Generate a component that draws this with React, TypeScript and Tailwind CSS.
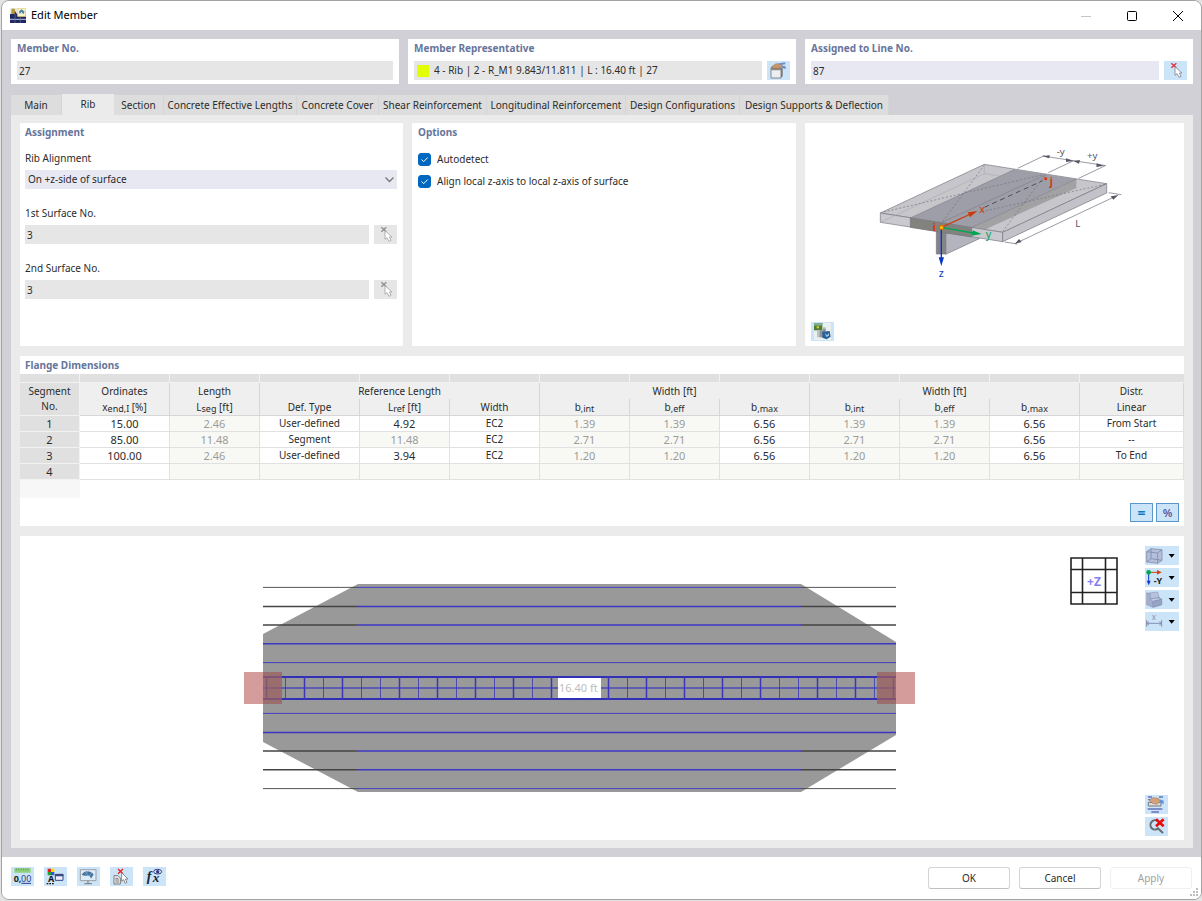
import { useState, type ReactNode } from "react";
import clsx from "clsx";

const tabs = [
  { label: "Main", className: "w-[51px]" },
  { label: "Rib", className: "w-[52px]" },
  { label: "Section", className: "w-[50px]" },
  { label: "Concrete Effective Lengths", className: "w-[133px]" },
  { label: "Concrete Cover", className: "w-[82px]" },
  { label: "Shear Reinforcement", className: "w-[108px]" },
  { label: "Longitudinal Reinforcement", className: "w-[139px]" },
  { label: "Design Configurations", className: "w-[114px]" },
  { label: "Design Supports & Deflection", className: "w-[149px]" },
];

// cells starting with "~" are calculated and shown as locked
const rows = [
  ["15.00", "~2.46", "User-defined", "4.92", "EC2", "~1.39", "~1.39", "6.56", "~1.39", "~1.39", "6.56", "From Start"],
  ["85.00", "~11.48", "Segment", "~11.48", "EC2", "~2.71", "~2.71", "6.56", "~2.71", "~2.71", "6.56", "--"],
  ["100.00", "~2.46", "User-defined", "3.94", "EC2", "~1.20", "~1.20", "6.56", "~1.20", "~1.20", "6.56", "To End"],
  ["", "~", "~", "~", "~", "~", "~", "~", "~", "~", "~", "~"],
];

const columns = [
  "w-[60px]",
  "w-[90px]",
  "w-[90px]",
  "w-[100px]",
  "w-[90px]",
  "w-[90px]",
  "w-[90px]",
  "w-[90px]",
  "w-[90px]",
  "w-[90px]",
  "w-[90px]",
  "w-[90px]",
  "w-auto",
];

const Heading = ({ children }: { children: ReactNode }) => (
  <h2 className="font-bold leading-4 text-[#66759b]">{children}</h2>
);

type IconButtonProps = {
  label: string;
  children: ReactNode;
  disabled?: boolean;
};

const IconButton = ({ label, children, disabled }: IconButtonProps) => (
  <button
    aria-label={label}
    disabled={disabled}
    className={clsx("h-[19px] w-[23px] shrink-0", disabled ? "bg-[#e6e6e6]" : "bg-[#cce4f7]")}
  >
    <svg viewBox="0 0 69 57" className="size-full">
      {children}
    </svg>
  </button>
);

const PickIcon = ({ muted }: { muted?: boolean }) => (
  <>
    <path d="M22 7l15 13M37 7L22 20" stroke={muted ? "#8c8c8c" : "#e0303c"} strokeWidth="4" />
    <path
      d="M33 17v26l6-5 6 11 6-3-5-10h8z"
      fill="#fff"
      stroke={muted ? "#a5a5a5" : "#7d8794"}
      strokeWidth="2.5"
    />
  </>
);

const TitleIcon = () => (
  <svg viewBox="0 0 48 45" className="h-[15px] w-4">
    <rect y="18" width="48" height="27" fill="#20285e" />
    <path d="M0 34h48" stroke="#b8c4e6" strokeWidth="3" />
    <path d="M15 18v27M31 26v19" stroke="#6773a8" strokeWidth="2" />
    <rect width="22" height="18" fill="#e8e8e8" />
    <path d="M5 2h10v8l3 8H4V8z" fill="#b3983d" />
    <path d="M15 9l6 9h-7z" fill="#2a3566" />
    <rect x="23" y="1" width="24" height="24" fill="#f7f2c8" stroke="#e7d46c" strokeWidth="2" />
    <path d="M27 10l8-6 9 7-4 8-5-7-6 6z" fill="#5282b6" />
  </svg>
);

const CaptionBar = () => (
  <header className="flex h-[29px] shrink-0 items-center bg-white pl-2">
    <TitleIcon />
    <h1 className="ml-[5px] text-[11px] text-black">Edit Member</h1>
    <div className="ml-auto flex h-full">
      <button aria-label="Minimize" className="flex w-[46px] items-center justify-center">
        <svg viewBox="0 0 10 10" className="size-[10px]" stroke="#c4c4c4">
          <path d="M0 5.5h10" />
        </svg>
      </button>
      <button aria-label="Maximize" className="flex w-[46px] items-center justify-center">
        <svg viewBox="0 0 10 10" className="size-[10px]" fill="none" stroke="#000">
          <rect x=".5" y=".5" width="9" height="9" rx="1" />
        </svg>
      </button>
      <button aria-label="Close" className="flex w-[46px] items-center justify-center">
        <svg viewBox="0 0 10 10" className="size-[10px]" stroke="#000">
          <path d="M0 0l10 10M10 0L0 10" />
        </svg>
      </button>
    </div>
  </header>
);

const MemberFields = () => (
  <div className="grid grid-cols-3 gap-[9px]">
    <section className="bg-white px-[6px] pt-px pb-1">
      <Heading>
        <label htmlFor="member-no">Member No.</label>
      </Heading>
      <input id="member-no" readOnly defaultValue="27" className="mt-[5px] block h-[19px] w-full bg-[#e6e6e6] px-[2px]" />
    </section>
    <section className="bg-white px-[6px] pt-px pb-1">
      <Heading>
        <label htmlFor="representative">Member Representative</label>
      </Heading>
      <div className="mt-[5px] flex gap-[5px]">
        <div className="flex h-[19px] flex-1 items-center gap-[5px] bg-[#e6e6e6] pl-[3px]">
          <span className="size-3 shrink-0 bg-[#e1ff00]" />
          <input
            id="representative"
            readOnly
            defaultValue="4 - Rib | 2 - R_M1 9.843/11.811 | L : 16.40 ft | 27"
            className="min-w-0 flex-1 bg-transparent"
          />
        </div>
        <IconButton label="Edit representative">
          <path d="M12 20h30v31H12z" fill="#eceef0" stroke="#85898e" strokeWidth="3" />
          <path d="M12 18h30v10H12z" fill="#8f8a86" />
          <path d="M42 22l5-5v28l-5 6z" fill="#777" />
          <path d="M14 17l13-9 14 1 6 6-10 7H20z" fill="#c9966c" stroke="#8d6546" strokeWidth="1.5" />
          <path d="M35 7l20-3v6l-14 2zM44 14l12 2v8l-10-3z" fill="#6c8fc5" />
        </IconButton>
      </div>
    </section>
    <section className="bg-white px-[6px] pt-px pb-1">
      <Heading>
        <label htmlFor="line-no">Assigned to Line No.</label>
      </Heading>
      <div className="mt-[5px] flex gap-[5px]">
        <input id="line-no" defaultValue="87" className="h-[19px] min-w-0 flex-1 bg-[#e8e8f3] px-[2px]" />
        <IconButton label="Pick line">
          <PickIcon />
        </IconButton>
      </div>
    </section>
  </div>
);

const SurfaceField = ({ id, label }: { id: string; label: string }) => (
  <div className="mt-4">
    <label htmlFor={id} className="block leading-4">
      {label}
    </label>
    <div className="mt-1 flex gap-[5px]">
      <input id={id} readOnly defaultValue="3" className="h-[19px] min-w-0 flex-1 bg-[#e6e6e6] px-[2px]" />
      <IconButton label={`Pick ${label}`} disabled>
        <PickIcon muted />
      </IconButton>
    </div>
  </div>
);

const Assignment = () => (
  <section className="bg-white pt-px pr-[6px] pl-[5px]">
    <Heading>Assignment</Heading>
    <label htmlFor="alignment" className="mt-[10px] block leading-4">
      Rib Alignment
    </label>
    <div className="relative mt-1">
      <select id="alignment" className="block h-[19px] w-full appearance-none bg-[#e8e8f3] px-[3px]">
        <option>On +z-side of surface</option>
        <option>On -z-side of surface</option>
      </select>
      <svg
        viewBox="0 0 9 6"
        className="pointer-events-none absolute top-[7px] right-[3px] h-[6px] w-[9px]"
        fill="none"
        stroke="#777"
        strokeWidth="1.3"
      >
        <path d="M.5 .5l4 4 4-4" />
      </svg>
    </div>
    <SurfaceField id="surface-1" label="1st Surface No." />
    <SurfaceField id="surface-2" label="2nd Surface No." />
  </section>
);

const Option = ({ label }: { label: string }) => (
  <label className="flex h-[22px] items-center gap-[6px]">
    <span className="relative size-[13px]">
      <input
        type="checkbox"
        defaultChecked
        className="peer block size-[13px] appearance-none rounded-[3px] border border-[#8a8a8a] bg-white checked:border-[#0067c0] checked:bg-[#0067c0]"
      />
      <svg
        viewBox="0 0 13 13"
        className="pointer-events-none absolute inset-0 hidden peer-checked:block"
        fill="none"
        stroke="#fff"
      >
        <path d="M3.5 6.5l2.2 2.2 4-4.2" />
      </svg>
    </span>
    {label}
  </label>
);

const RibSketch = () => (
  <svg viewBox="15 9 1137 669" className="size-full" fontFamily="Noto Sans, sans-serif">
    <g stroke="#75757f" strokeWidth="2" strokeLinejoin="round">
      <path d="M437 339l0 64 101-47v-16z" fill="#b4b4be" />
      <path d="M409 330h28v72h-28z" fill="#83838a" />
      <path d="M553 133l367 58-312 146-367-58z" fill="#c6c6cb" />
      <path d="M645 148l184 29-314 146-184-29z" fill="#9e9ea9" stroke="none" />
      <path d="M515 323l314-146v27L540 335z" fill="#a2a2a5" stroke="none" />
      <path d="M241 279l367 58v28l-367-58z" fill="#c9c9cf" />
      <path d="M331 294l184 29v28l-184-29z" fill="#82827f" />
      <path d="M608 337l312-146v28L608 365z" fill="#c2c2c8" />
      <path d="M645 148L331 294M829 177L515 323M740 163L424 308" fill="none" strokeWidth="1.5" />
      <path d="M553 133v28l276 43M553 161L241 307" fill="none" stroke="#a2a2ab" strokeWidth="1.5" />
    </g>
    <g fill="none" stroke="#71717c" strokeWidth="2" strokeDasharray="6 6">
      <path d="M251 276L725 165M553 135L428 305M915 193L545 275M608 335L735 165" />
    </g>
    <path d="M553 262L728 182" stroke="#4f4f5c" strokeWidth="3" strokeDasharray="15 11" />
    <g fill="none" stroke="#666676" strokeWidth="2">
      <path d="M653 145l80-38M745 158l76-36M836 175l80-38M728 108l190 29" />
      <path d="M614 366l38 6M926 218l38 6M645 371l310-146" />
    </g>
    <g fill="#555565">
      <path d="M728 108l22-2-3 9zM820 123l-22-8 0 11zM820 123l20-3-3 11zM912 137l-22-7-1 11z" />
      <path d="M645 371l12-14 8 9zM954 226l-22 3 8 10z" />
    </g>
    <g fontSize="29" fill="#555563">
      <text x="770" y="105">-y</text>
      <text x="861" y="118">+y</text>
      <text x="826" y="322">L</text>
    </g>
    <path d="M424 322l88-40" stroke="#cc3c0a" strokeWidth="4" />
    <path d="M532 273l-29 4 7 15z" fill="#cc3c0a" />
    <path d="M424 322l96 17" stroke="#00a651" strokeWidth="4" />
    <path d="M545 342l-27-11-3 16z" fill="#00a651" />
    <path d="M424 324v92" stroke="#0a37c8" strokeWidth="4" />
    <path d="M424 438l-8-26h16z" fill="#0a37c8" />
    <rect x="419" y="317" width="11" height="11" fill="#ffc400" stroke="#d96500" strokeWidth="3" />
    <circle cx="737" cy="176" r="5" fill="#e03a12" />
    <g fontSize="32">
      <text x="538" y="278" fill="#cc3c0a">x</text>
      <text x="557" y="354" fill="#00a651">y</text>
      <text x="416" y="471" fill="#0a37c8">z</text>
      <g fontWeight="bold" fill="#d63a10">
        <text x="398" y="334">i</text>
        <text x="749" y="195">j</text>
      </g>
    </g>
  </svg>
);

const th = "border-r border-[#d6d6d8] bg-[#efefef] font-normal";
const sub = "-bottom-px text-[9px]";

const FlangeTable = () => (
  <table className="w-full table-fixed border-separate border-spacing-0 text-center">
    <colgroup>
      {columns.map((width, i) => (
        <col key={i} className={width} />
      ))}
    </colgroup>
    <thead>
      <tr className="h-[9px]">
        {columns.map((_, i) => (
          <td key={i} className="border-r border-b border-[#f2f2f2] bg-[#e0e0e0] last:border-r-0" />
        ))}
      </tr>
      <tr className="h-4 leading-4">
        <th rowSpan={2} className="border-r border-b border-[#f2f2f2] bg-[#e0e0e0] font-normal leading-[15px]">
          Segment
          <br />
          No.
        </th>
        <th className={th}>Ordinates</th>
        <th className={th}>Length</th>
        <th colSpan={3} className={th}>Reference Length</th>
        <th colSpan={3} className={th}>Width [ft]</th>
        <th colSpan={3} className={th}>Width [ft]</th>
        <th className={th}>Distr.</th>
      </tr>
      <tr className="h-[17px] leading-4 *:border-b">
        <th className={th}>x<sub className={sub}>end,I</sub> [%]</th>
        <th className={th}>L<sub className={sub}>seg</sub> [ft]</th>
        <th className={th}>Def. Type</th>
        <th className={th}>L<sub className={sub}>ref</sub> [ft]</th>
        <th className={th}>Width</th>
        {[0, 1].map((side) =>
          ["int", "eff", "max"].map((name) => (
            <th key={`${side}-${name}`} className={th}>
              b<sub className={sub}>,{name}</sub>
            </th>
          )),
        )}
        <th className={th}>Linear</th>
      </tr>
    </thead>
    <tbody>
      {rows.map((row, i) => (
        <tr key={i} className="h-4 leading-[15px]">
          <th className="border-r border-b border-[#f2f2f2] bg-[#e0e0e0] text-[11px] font-normal">{i + 1}</th>
          {row.map((cell, j) => (
            <td
              key={j}
              className={clsx(
                "border-r border-b border-[#e1e1e1]",
                cell.startsWith("~") ? "bg-[#f8f9f4] text-[#9b9b9b]" : "bg-white",
                /\d\.\d/.test(cell) && "text-[11px]",
              )}
            >
              {cell.replace("~", "")}
            </td>
          ))}
        </tr>
      ))}
    </tbody>
  </table>
);

const bars = [
  { y: 587.4, width: 0.9, short: true },
  { y: 606.4, width: 1.5, short: true },
  { y: 625.1, width: 1.5, short: true },
  { y: 643.8, width: 1.5 },
  { y: 662.6, width: 0.9 },
  { y: 713.4, width: 0.9 },
  { y: 732.4, width: 1.5 },
  { y: 751.1, width: 1.5, short: true },
  { y: 769.8, width: 1.5, short: true },
  { y: 788.6, width: 0.9, short: true },
];
const stirrups = Array.from({ length: 34 }, (_, i) => 266 + i * 19);
const thickStirrups = [0, 2, 4, 7, 9, 11, 13, 15, 18, 20, 22, 24, 26, 29, 31, 33];

const ReinforcementView = () => (
  <svg viewBox="20 536 1164 304" className="size-full" fontFamily="Noto Sans, sans-serif">
    <path d="M263 634L358 584H801L896 642V735L801 792H358L263 742Z" fill="#999" />
    {bars.map(({ y, width, short }) => (
      <g key={y} strokeWidth={width}>
        <path d={short ? `M358 ${y}H801` : `M263 ${y}H896`} stroke="#3c38c4" />
        {short && <path d={`M263 ${y}H358M801 ${y}H896`} stroke="#444" />}
      </g>
    ))}
    <path d="M263 677H896M263 699H896" stroke="#3330b5" strokeWidth="2.2" />
    <path d="M263 688H896" stroke="#4a48bd" strokeWidth="1.6" />
    {stirrups.map((x, i) => (
      <path key={x} d={`M${x}.5 676V700`} stroke="#3a36b8" strokeWidth={thickStirrups.includes(i) ? 1.5 : 0.8} />
    ))}
    <path d="M244 672h38v32h-38zM877 672h38v32h-38z" fill="#bc5f5f" fillOpacity=".62" />
    <path d="M263 672h19v32h-19zM877 672h19v32h-19z" fill="#706060" fillOpacity=".3" />
    <rect x="558" y="678" width="43" height="20" fill="#fff" />
    <text x="559" y="692" fontSize="11" fill="#bdbdbd">16.40 ft</text>
  </svg>
);

const NavigationCube = () => (
  <svg viewBox="0 0 48 48" className="size-12" fontFamily="Noto Sans, sans-serif">
    <g fill="#fff" stroke="#222" strokeWidth="1.6">
      <path d="M1 1h46v46H1zM12.5 1v46M35.5 1v46M1 12.5h46M1 35.5h46" />
    </g>
    <text x="24" y="29" fontSize="12" fontWeight="bold" textAnchor="middle" fill="#8280f5">+Z</text>
  </svg>
);

const DropButton = ({ label, children }: { label: string; children: ReactNode }) => (
  <button aria-label={label} className="h-[19px] w-[34px] bg-[#cce4f7]">
    <svg viewBox="0 0 102 57" className="size-full" fontFamily="Noto Sans, sans-serif">
      {children}
      <path d="M71 24h18l-9 11z" fill="#000" />
    </svg>
  </button>
);

const Viewport = () => (
  <section className="relative min-h-[200px] flex-1 bg-white">
    <div className="absolute inset-0">
      <ReinforcementView />
    </div>
    <div className="absolute top-[10px] right-[5px] bottom-1 flex gap-[27px]">
      <div className="pt-[11px]">
        <NavigationCube />
      </div>
      <div className="flex flex-col gap-[3px]">
        <DropButton label="Display mode">
          <g fill="#b4bfdb" stroke="#7480a0" strokeWidth="2" strokeLinejoin="round">
            <path d="M5 17l13-9 33 3v32l-13 9-33-4z" />
            <path d="M5 17l33 4 13-10M38 21v31M18 8v30l33 5M18 38L5 48" fill="none" />
          </g>
        </DropButton>
        <DropButton label="View direction">
          <path d="M11 13h27" stroke="#d8400f" strokeWidth="3" />
          <path d="M50 13l-14-7v14z" fill="#d8400f" />
          <path d="M11 13v29" stroke="#1238cc" strokeWidth="3" />
          <path d="M11 52L5 38h12z" fill="#1238cc" />
          <circle cx="11" cy="13" r="7" fill="#00a651" />
          <text x="26" y="47" fontSize="27" fontWeight="bold" fill="#222">-Y</text>
        </DropButton>
        <DropButton label="Solids">
          <g stroke="#7f8caf" strokeWidth="1.5" strokeLinejoin="round">
            <path d="M11 9l27-3 5 17-27 4z" fill="#b6c1dc" />
            <path d="M5 8l11 4v15h9l18-4 7 5v16L24 52 5 44z" fill="#a3afcd" />
            <path d="M16 27l25-3 9 4-27 6z" fill="#c4cee5" />
            <path d="M23 34l27-6v16L24 52z" fill="#97a4c6" />
          </g>
        </DropButton>
        <DropButton label="Dimensions">
          <g stroke="#8490b4" strokeWidth="3">
            <path d="M5 24v20M50 24v20M5 34h45" />
            <path d="M12 29l-7 5 7 5M43 29l7 5-7 5" fill="none" />
          </g>
          <text x="20" y="25" fontSize="24" fill="#8490b4">x</text>
        </DropButton>
        <div className="mt-auto flex flex-col gap-[3px]">
          <IconButton label="Edit table">
            <path d="M9 6h12M42 6h12M10 14h6M8 42h44M19 51h23" stroke="#2d38a0" strokeWidth="3" />
            <path d="M10 22h38v11H10z" fill="#ddd" stroke="#777" strokeWidth="3" />
            <path d="M12 15l12-7 16 2 6 9-10 9-14-3z" fill="#d3a27b" stroke="#8f6a50" strokeWidth="1.5" />
            <path d="M44 13l12 4v10l-11-3z" fill="#5f95d6" />
          </IconButton>
          <IconButton label="Reset zoom">
            <path d="M38 12A14 14 0 1 0 40 34" fill="none" stroke="#666b70" strokeWidth="6" />
            <path d="M37 32l17 16" stroke="#666b70" strokeWidth="6" />
            <path d="M33 7l23 21M56 7L33 28" stroke="#e90b0b" strokeWidth="8" />
          </IconButton>
        </div>
      </div>
    </div>
  </section>
);

const Footer = () => (
  <footer className="flex h-[42px] shrink-0 items-center justify-between bg-white px-[9px]">
    <div className="flex gap-[10px] pb-[3px]">
      <IconButton label="Units and decimal places">
        <path d="M10 4h49v13H10z" fill="#8fd07c" />
        <path d="M16 4v6M23 4v6M30 4v6M37 4v6M44 4v6M51 4v6" stroke="#4c9440" strokeWidth="2" />
        <text x="8" y="44" fontSize="27" fontWeight="bold" fill="#222">0,</text>
        <text x="30" y="44" fontSize="27" fill="#2d3c8c">00</text>
        <path d="M31 49h29" stroke="#2d3c8c" strokeWidth="3" />
      </IconButton>
      <IconButton label="Display properties">
        <path d="M11 5h10v10H11z" fill="#e02020" />
        <path d="M21 5h10v10H21z" fill="#ffe000" />
        <path d="M11 15h10v10H11z" fill="#20a030" />
        <path d="M21 15h10v10H21z" fill="#2f55d4" />
        <text x="12" y="45" fontSize="27" fontWeight="bold" fill="#111">A</text>
        <path d="M8 50h24" stroke="#111" strokeWidth="4" strokeDasharray="5 3" />
        <path d="M34 22h23v18H34z" fill="#eef" stroke="#38477f" strokeWidth="3" />
        <path d="M33 22h25v6H33z" fill="#38477f" />
      </IconButton>
      <IconButton label="Display settings">
        <path d="M10 8h47v33H10z" fill="#dcebf8" stroke="#999ea5" strokeWidth="3" />
        <path d="M33 41v8M22 50h23" stroke="#888" strokeWidth="4" />
        <path d="M14 24C20 10 38 8 50 22L42 35C40 26 34 24 27 27z" fill="#45719f" />
        <path d="M24 14l12 12M33 11l-8 15M44 17l-7 11" stroke="#9dc0dd" strokeWidth="1.5" />
      </IconButton>
      <IconButton label="Select in model">
        <path d="M24 6l15 14M39 6L24 20" stroke="#ee1c1c" strokeWidth="4" />
        <path d="M12 26h12l7 7v18H12z" fill="#f1f1f1" stroke="#666" strokeWidth="2.5" />
        <path d="M16 34h9M16 39h11M16 45h11" stroke="#777" strokeWidth="3" />
        <path d="M35 17v26l6-5 5 11 5-3-5-10h8z" fill="#fff" stroke="#777" strokeWidth="2.5" />
      </IconButton>
      <IconButton label="Formula view">
        <text x="11" y="42" fontSize="42" fontStyle="italic" fontWeight="bold" fontFamily="Liberation Serif, serif" fill="#202434">f</text>
        <text x="29" y="44" fontSize="40" fontStyle="italic" fontWeight="bold" fontFamily="Liberation Serif, serif" fill="#202434">x</text>
        <ellipse cx="44" cy="14" rx="12" ry="7" fill="#dfe6f5" stroke="#30397d" strokeWidth="3" />
        <circle cx="44" cy="14" r="5" fill="#30397d" />
      </IconButton>
    </div>
    <div className="flex gap-[9px]">
      {["OK", "Cancel", "Apply"].map((label) => (
        <button
          key={label}
          disabled={label === "Apply"}
          className="h-[22px] w-[82px] rounded-[3px] border border-[#d4d4d4] border-b-[#c0c0c0] disabled:border-[#efefef] disabled:text-[#a0a0a0]"
        >
          {label}
        </button>
      ))}
    </div>
    <svg viewBox="0 0 9 9" className="pointer-events-none absolute right-[2px] bottom-[2px] size-[9px]" fill="#bdbdbd">
      <path d="M6 0h2v2H6zM3 3h2v2H3zM6 3h2v2H6zM0 6h2v2H0zM3 6h2v2H3zM6 6h2v2H6z" />
    </svg>
  </footer>
);

const App = () => {
  const [active, setActive] = useState("Rib");
  const [pressed, setPressed] = useState({ equal: true, percent: true });

  return (
    <div className="flex min-h-screen bg-[#e3e3e3] pb-px pl-px font-['Noto_Sans',sans-serif] text-[10px] text-[#2b2b2b]">
      <div className="relative flex flex-1 flex-col overflow-hidden rounded-lg border border-[#a3a3a3]">
        <CaptionBar />
        <main className="flex flex-1 flex-col bg-[#d1d0d6] pt-[9px] pr-2 pb-[9px] pl-[9px]">
          <MemberFields />
          <div role="tablist" className="mt-[10px] flex h-[21px] items-end">
            {tabs.map((tab) => (
              <button
                key={tab.label}
                role="tab"
                aria-selected={tab.label === active}
                onClick={() => setActive(tab.label)}
                className={clsx(
                  "shrink-0 whitespace-nowrap",
                  tab.className,
                  tab.label === active ? "h-[21px] bg-[#ebebeb]" : "h-5 border-r border-[#d5d5d5] bg-[#dddddd]",
                )}
              >
                {tab.label}
              </button>
            ))}
          </div>
          <div className="flex flex-1 flex-col gap-[10px] bg-[#ebebeb] px-[9px] pt-2 pb-2">
            <div className="grid h-[223px] grid-cols-[383fr_384fr_379fr] gap-[9px]">
              <Assignment />
              <section className="bg-white px-[6px] pt-px">
                <Heading>Options</Heading>
                <div className="mt-2">
                  <Option label="Autodetect" />
                  <Option label="Align local z-axis to local z-axis of surface" />
                </div>
              </section>
              <section className="relative bg-white">
                <RibSketch />
                <div className="absolute bottom-[5px] left-[6px] flex">
                  <IconButton label="Change picture">
                    <path d="M9 3h51v51H9z" fill="#e9f0ef" />
                    <path d="M9 3h25v22H9z" fill="#4d7d32" />
                    <path d="M9 3h25v8H9z" fill="#7fae8f" />
                    <path d="M17 13h7v6h-7z" fill="#e2c93a" />
                    <path d="M18 25h18v-9h8v16h-9v14H18z" fill="#bcc4c2" />
                    <path d="M26 25h10v-5h8v14h-8v12H26z" fill="#8b9795" />
                    <path d="M34 29l22-2 3 17-12 8-13-5z" fill="#28609a" />
                    <path d="M41 32l7 8 6-7v8l-8 4z" fill="#a7c9e8" />
                  </IconButton>
                </div>
              </section>
            </div>
            <section className="flex h-[170px] flex-col bg-white">
              <div className="px-[5px] pt-px pb-px">
                <Heading>Flange Dimensions</Heading>
              </div>
              <FlangeTable />
              <div className="h-[18px] w-[60px] shrink-0 bg-[#f7f7f7]" />
              <div className="mt-auto flex justify-end gap-[3px] pr-[5px] pb-1">
                <button
                  aria-pressed={pressed.equal}
                  onClick={() => setPressed({ ...pressed, equal: !pressed.equal })}
                  className="h-[19px] w-[23px] border border-[#5a96cb] bg-[#cce4f7] text-sm font-bold leading-4 text-[#0b7ac6]"
                >
                  =
                </button>
                <button
                  aria-pressed={pressed.percent}
                  onClick={() => setPressed({ ...pressed, percent: !pressed.percent })}
                  className="h-[19px] w-[23px] border border-[#5a96cb] bg-[#cce4f7] text-[11px] font-semibold leading-4 text-[#5c559c]"
                >
                  %
                </button>
              </div>
            </section>
            <Viewport />
          </div>
        </main>
        <Footer />
      </div>
    </div>
  );
};

export default App;
